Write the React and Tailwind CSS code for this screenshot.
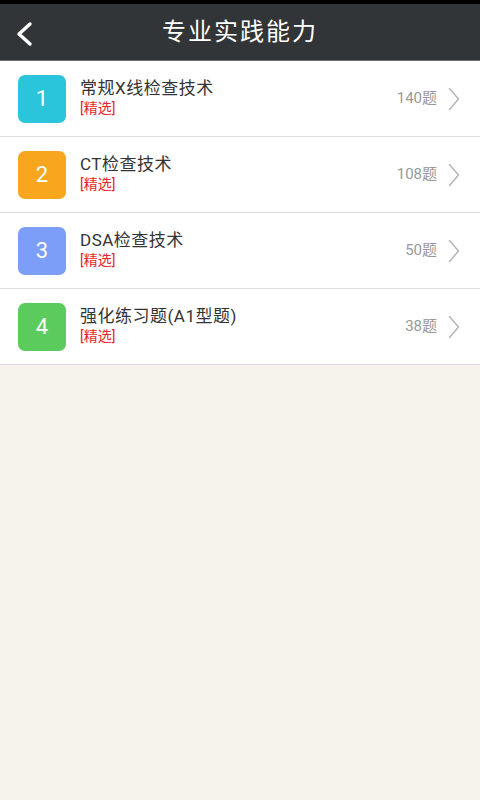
import React from 'react';

const items = [
  { n: 1, title: '常规X线检查技术', count: '140题', color: 'bg-[#2ac5da]' },
  { n: 2, title: 'CT检查技术', count: '108题', color: 'bg-[#f8a61d]' },
  { n: 3, title: 'DSA检查技术', count: '50题', color: 'bg-[#7c9ef8]' },
  { n: 4, title: '强化练习题(A1型题)', count: '38题', color: 'bg-[#5ccb5e]' },
];

const font = { fontFamily: '"Roboto", "Noto Sans CJK SC", sans-serif' };

const App = () => {
  return (
    <div className="w-[480px] h-[800px] bg-[#f6f3ec] flex flex-col" style={font}>
      {/* status strip */}
      <div className="h-[4px] bg-black" />

      {/* header */}
      <div className="h-[57px] bg-[#323537] border-b border-[#6b6e70] flex items-center relative">
        <svg className="absolute left-[14px] top-[17px]" width="22" height="26" viewBox="0 0 22 26">
          <path d="M16 3 L5 13 L16 23" fill="none" stroke="#fff" strokeWidth="3.4" strokeLinecap="round" strokeLinejoin="round" />
        </svg>
        <h1 className="flex-1 text-center text-white text-[24px] tracking-[2px] font-normal">专业实践能力</h1>
      </div>

      {/* list */}
      <div className="flex flex-col">
        {items.map(({ n, title, count, color }) => (
          <div key={n} className="h-[76px] bg-white border-b border-[#dcdcdc] flex items-center pl-[18px] pr-[20px]">
            <div className={`w-[48px] h-[48px] rounded-[7px] ${color} flex items-center justify-center text-white text-[22px]`}>
              {n}
            </div>
            <div className="flex-1 ml-[14px] flex flex-col pb-[2px]">
              <span className="text-[#333] text-[17px] leading-[21px] tracking-[0.5px]">{title}</span>
              <span className="text-[#e5262c] text-[14px] leading-[18px]">[精选]</span>
            </div>
            <span className="text-[#999] text-[15px] mr-[11px]">{count}</span>
            <svg width="12" height="24" viewBox="0 0 12 24">
              <path d="M1.5 1.5 L10.5 12 L1.5 22.5" fill="none" stroke="#b8b8b8" strokeWidth="1.6" strokeLinecap="round" strokeLinejoin="round" />
            </svg>
          </div>
        ))}
      </div>
    </div>
  );
};

export default App;
